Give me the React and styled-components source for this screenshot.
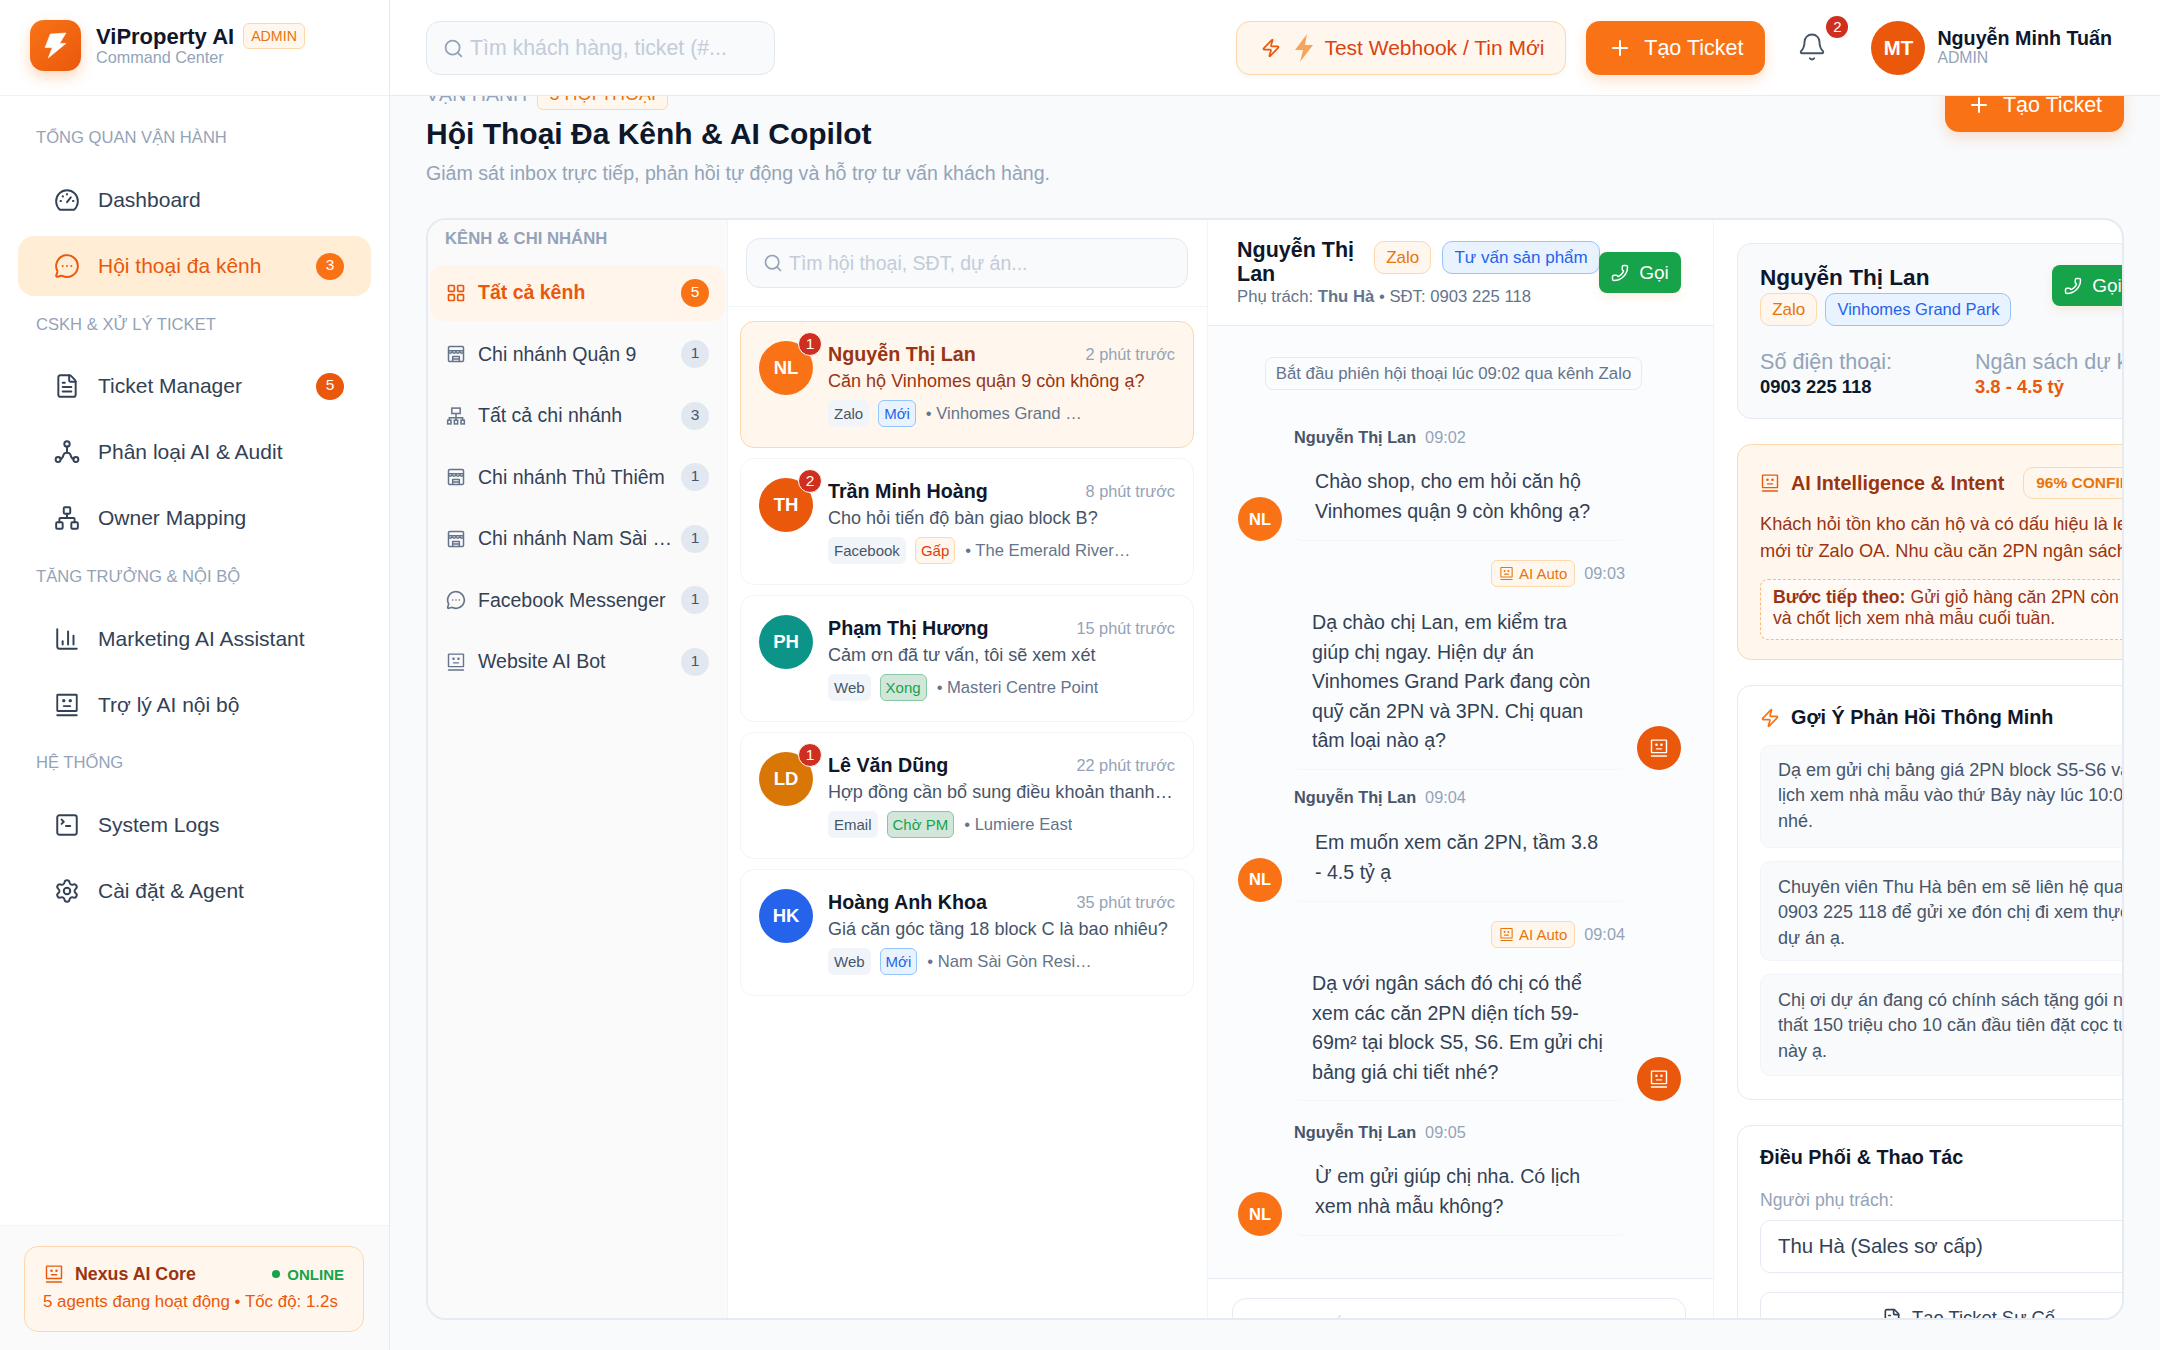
import React from 'react';
import styled, { createGlobalStyle, css } from 'styled-components';
import {
  Bell, ChartColumn, FileText, LayoutGrid, MessageCircleMore, Network, Phone, Plus, Search,
  Settings, SquareTerminal, Zap,
} from 'lucide-react';

const GlobalStyle = createGlobalStyle`
  * { box-sizing: border-box; }
  html, body { margin: 0; height: 100%; }
  body {
    font-family: "Liberation Sans", Arial, sans-serif;
    background: #f8fafc;
    color: #0f172a;
    overflow: hidden;
  }
`;

const BotIcon = ({ size = 20 }) => (
  <svg width={size} height={size} viewBox="0 0 24 24" fill="none" stroke="currentColor" strokeWidth="1.7" strokeLinecap="round">
    <rect x="3" y="2.5" width="18" height="15" rx="0.5" />
    <circle cx="9" cy="8" r="0.7" fill="currentColor" />
    <circle cx="15" cy="8" r="0.7" fill="currentColor" />
    <path d="M9 13h6M3 21.5h18" />
  </svg>
);

const GaugeIcon = ({ size = 26 }) => (
  <svg width={size} height={size} viewBox="0 0 24 24" fill="none" stroke="currentColor" strokeWidth="1.8" strokeLinecap="round" strokeLinejoin="round">
    <path d="M5.500 21C3.200 19.200 2 16 2 13 2 7.500 6.500 3 12 3s10 4.500 10 10c0 3-1.200 6.200-3.500 8z" />
    <path d="M12 14l3.500-4.500M6 13h.5M17.500 13h.5M8 8.500l.3.300M12 6.500v.5" />
  </svg>
);

const NodesIcon = ({ size = 26 }) => (
  <svg width={size} height={size} viewBox="0 0 24 24" fill="none" stroke="currentColor" strokeWidth="1.8" strokeLinecap="round">
    <circle cx="12" cy="4.500" r="2.500" />
    <circle cx="3.800" cy="19" r="2.300" />
    <circle cx="20.200" cy="19" r="2.300" />
    <path d="M12 7v5M6 18.500c1.500-.5 2.500-2.500 3-4.500 1-1.800 5-1.800 6 0 .5 2 1.500 4 3 4.500" />
  </svg>
);

const StoreIcon = ({ size = 20 }) => (
  <svg width={size} height={size} viewBox="0 0 24 24" fill="none" stroke="currentColor" strokeWidth="1.8" strokeLinejoin="round">
    <rect x="3" y="3" width="18" height="18" rx="1.500" />
    <path d="M3 8h18M3 9.500c1.500 2 3 2 4.500 0 1.500 2 3 2 4.500 0 1.500 2 3 2 4.500 0 1.500 2 3 2 4.500 0" />
    <path d="M8 21v-6h8v6M8 18h8" />
  </svg>
);

const OrgIcon = ({ size = 20 }) => (
  <svg width={size} height={size} viewBox="0 0 24 24" fill="none" stroke="currentColor" strokeWidth="1.8">
    <rect x="7" y="2.500" width="10" height="6.500" />
    <path d="M12 9v5M4 17v-3h16v3M12 14v3" />
    <rect x="2" y="17" width="4" height="4.500" />
    <rect x="10" y="17" width="4" height="4.500" />
    <rect x="18" y="17" width="4" height="4.500" />
  </svg>
);

const BoltFill = () => (
  <svg width="22" height="30" viewBox="0 0 22 30">
    <path d="M14 1 2 17h8l-3 12 13-17h-8z" fill="#f6a45e" />
  </svg>
);

const LogoBolt = () => (
  <svg width="23" height="27" viewBox="0 0 22 26">
    <path d="M6 2 21 1 15 11h6L4 25l4-10H1z" fill="#fff" stroke="#fff" strokeWidth="0.6" strokeLinejoin="round" />
  </svg>
);

const Shell = styled.div`
  display: flex;
  width: 2160px;
  height: 1350px;
  overflow: hidden;
`;

/* ---------- sidebar ---------- */

const Sidebar = styled.aside`
  width: 390px;
  flex: none;
  display: flex;
  flex-direction: column;
  background: #fff;
  border-right: 1px solid #e6eaf2;
`;

const Brand = styled.div`
  height: 96px;
  flex: none;
  display: flex;
  align-items: center;
  gap: 15px;
  padding: 0 30px 4px;
  border-bottom: 1px solid #eef1f6;
`;

const LogoMark = styled.div`
  width: 51px;
  height: 51px;
  border-radius: 14px;
  display: flex;
  align-items: center;
  justify-content: center;
  background: linear-gradient(135deg, #f97316, #ea580c);
  box-shadow: 0 6px 14px rgba(249, 115, 22, 0.28);
`;

const BrandTitleRow = styled.div`
  display: flex;
  align-items: flex-start;
  gap: 9px;
  margin-top: -4px;
`;

const BrandName = styled.div`
  font-size: 22px;
  font-weight: 700;
  line-height: 28px;
  color: #0f172a;
`;

const AdminChip = styled.span`
  font-size: 14.200px;
  line-height: 24px;
  padding: 0 7px;
  color: #e8750c;
  background: #fff7ed;
  border: 1px solid #fed7aa;
  border-radius: 6px;
  height: 26px;
`;

const BrandSub = styled.div`
  margin-top: -2px;
  font-size: 16.200px;
  line-height: 16px;
  color: #94a3b8;
`;

const Nav = styled.nav`
  flex: 1;
  padding: 12px 18px 0;
  display: flex;
  flex-direction: column;
`;

const NavLabel = styled.div`
  height: ${p => (p.$first ? '62px' : '54.400px')};
  padding: 0 0 ${p => (p.$first ? '3px' : '9px')} 18px;
  display: flex;
  align-items: center;
  font-size: 16.600px;
  color: #94a3b8;
`;

const NavItem = styled.div`
  height: 60px;
  margin-bottom: 6px;
  padding: 0 27px 0 36px;
  display: flex;
  align-items: center;
  gap: 18px;
  border-radius: 16px;
  font-size: 21px;
  color: ${p => (p.$active ? '#ea580c' : '#334155')};
  background: ${p => (p.$active ? '#ffedd5' : 'transparent')};
`;

const NavText = styled.span`
  flex: 1;
`;

const NavBadge = styled.span`
  width: 28px;
  height: 27px;
  border-radius: 50%;
  display: flex;
  align-items: center;
  justify-content: center;
  padding-bottom: 3px;
  font-size: 15.500px;
  color: #fff;
  background: ${p => p.$bg};
`;

const SideFooter = styled.div`
  height: 125px;
  flex: none;
  padding: 20px 25px 0 24px;
  background: #fafafa;
  border-top: 1px solid #f4f4f5;
`;

const CoreCard = styled.div`
  height: 86px;
  padding: 15px 19px;
  background: #fff7ed;
  border: 1px solid #fed7aa;
  border-radius: 14px;
`;

const CoreTop = styled.div`
  display: flex;
  align-items: center;
  gap: 11px;
  color: #ea580c;
  height: 24px;
`;

const CoreName = styled.b`
  flex: 1;
  font-size: 17.800px;
  color: #9a3412;
`;

const OnlineTag = styled.span`
  display: flex;
  align-items: center;
  gap: 7px;
  font-size: 15px;
  font-weight: 700;
  color: #16a34a;
  &::before {
    content: '';
    width: 8px;
    height: 8px;
    border-radius: 50%;
    background: #16a34a;
  }
`;

const CoreText = styled.div`
  font-size: 16.900px;
  line-height: 24px;
  color: #ea580c;
  margin: 4px 0 0 -1px;
  white-space: nowrap;
`;

/* ---------- top bar ---------- */

const MainCol = styled.div`
  flex: 1;
  min-width: 0;
  display: flex;
  flex-direction: column;
`;

const TopBar = styled.header`
  height: 96px;
  flex: none;
  display: flex;
  align-items: center;
  padding: 1px 36px 0;
  background: #fff;
  border-bottom: 1px solid #e6eaf2;
  position: relative;
  z-index: 2;
`;

const SearchBox = styled.div`
  display: flex;
  align-items: center;
  gap: 6px;
  width: ${p => p.$width};
  height: ${p => p.$height};
  padding: 0 16px;
  color: #94a3b8;
  background: #f8fafc;
  border: 1px solid #e2e8f0;
  border-radius: 14px;
  span {
    color: #c3ccd8;
    white-space: nowrap;
    font-size: ${p => p.$font};
  }
`;

const HeaderActions = styled.div`
  margin-left: auto;
  display: flex;
  align-items: center;
`;

const WebhookButton = styled.div`
  width: 330px;
  height: 54px;
  padding: 0 0 0 24px;
  display: flex;
  align-items: center;
  gap: 12px;
  font-size: 21px;
  color: #d9430f;
  background: #fff7ed;
  border: 1px solid #fed7aa;
  border-radius: 14px;
  box-shadow: 0 2px 4px rgba(15, 23, 42, 0.04);
  white-space: nowrap;
  & > svg:first-child { color: #ea580c; }
  & > svg:nth-child(2) { margin-right: -3px; }
`;

const PrimaryButton = styled.div`
  width: 179px;
  height: 54px;
  display: flex;
  align-items: center;
  justify-content: center;
  gap: 12px;
  font-size: 21.500px;
  color: #fff;
  background: #f97316;
  border-radius: 14px;
  box-shadow: 0 6px 14px rgba(249, 115, 22, 0.2);
  margin-left: ${p => p.$ml || '0'};
  flex: none;
`;

const BellWrap = styled.div`
  position: relative;
  width: 30px;
  height: 30px;
  margin: -3px 0 0 32px;
  color: #475569;
`;

const BellBadge = styled.span`
  position: absolute;
  top: -16px;
  left: 29px;
  width: 22px;
  height: 22px;
  border-radius: 50%;
  background: #cf2f1e;
  color: #fff;
  font-size: 15px;
  text-align: center;
  line-height: 22px;
`;

const UserAvatar = styled.div`
  width: 54px;
  height: 54px;
  margin-left: 44px;
  border-radius: 50%;
  background: #ea580c;
  color: #fff;
  font-size: 20.400px;
  font-weight: 700;
  display: flex;
  align-items: center;
  justify-content: center;
`;

const UserInfo = styled.div`
  margin: -5px 12px 0 12px;
  white-space: nowrap;
`;

const UserName = styled.div`
  font-size: 19.700px;
  font-weight: 700;
  line-height: 24px;
  color: #0f172a;
`;

const UserRole = styled.div`
  font-size: 15.800px;
  line-height: 16px;
  color: #94a3b8;
`;

/* ---------- page ---------- */

const PageScroll = styled.main`
  flex: 1;
  min-height: 0;
  overflow: hidden;
`;

const Page = styled.div`
  margin-top: -18px;
  padding: 0 36px;
`;

const PageHead = styled.div`
  display: flex;
  justify-content: space-between;
  align-items: flex-start;
`;

const Eyebrow = styled.div`
  display: flex;
  align-items: center;
  gap: 10px;
  height: 32px;
  font-size: 19.600px;
  color: #94a3b8;
`;

const EyebrowChip = styled.span`
  width: 131px;
  height: 32px;
  display: flex;
  align-items: center;
  justify-content: center;
  font-size: 18px;
  color: #e8750c;
  background: #fff7ed;
  border: 1px solid #fed7aa;
  border-radius: 6px;
`;

const PageTitle = styled.h1`
  margin: 6px 0 0;
  font-size: 30px;
  line-height: 36px;
  font-weight: 700;
  color: #0f172a;
`;

const PageSub = styled.p`
  margin: 9px 0 0;
  font-size: 19.600px;
  line-height: 24px;
  color: #94a3b8;
`;

const Workspace = styled.section`
  margin-top: 33px;
  height: 1102px;
  display: grid;
  grid-template-columns: 299px 481px 506px 1fr;
  background: #fff;
  border: 2px solid #e6eaf2;
  border-radius: 20px;
  overflow: hidden;
`;

/* ---------- channels ---------- */

const ChannelCol = styled.div`
  background: #fbfafa;
  padding: 0 2px;
`;

const ChannelHead = styled.div`
  height: 45px;
  padding: 0 0 8px 15px;
  display: flex;
  align-items: center;
  font-size: 16.700px;
  font-weight: 700;
  color: #94a3b8;
`;

const ChannelRow = styled.div`
  height: 55.500px;
  margin-bottom: 6px;
  padding: 0 16px 0 16px;
  display: flex;
  align-items: center;
  gap: 12px;
  border-radius: 14px;
  font-size: 19.500px;
  color: ${p => (p.$active ? '#ea580c' : '#334155')};
  font-weight: ${p => (p.$active ? 700 : 400)};
  background: ${p => (p.$active ? '#fff5eb' : 'transparent')};
  & > svg { flex: none; color: ${p => (p.$active ? '#ea580c' : '#64748b')}; }
`;

const ChannelName = styled.span`
  flex: 1;
  min-width: 0;
  overflow: hidden;
  white-space: nowrap;
  text-overflow: ellipsis;
`;

const CountBadge = styled.span`
  width: 28px;
  height: 28px;
  flex: none;
  margin-left: -5px;
  border-radius: 50%;
  display: flex;
  align-items: center;
  justify-content: center;
  padding-bottom: 2px;
  font-size: 15.500px;
  font-weight: 400;
  color: ${p => (p.$active ? '#fff' : '#475569')};
  background: ${p => (p.$active ? '#f97316' : '#e2e8f0')};
`;

/* ---------- conversation list ---------- */

const ListCol = styled.div`
  border-left: 1px solid #f1f5f9;
  border-right: 1px solid #f1f5f9;
`;

const ListSearch = styled.div`
  height: 87px;
  padding: 18px 18px 0;
  border-bottom: 1px solid #f1f5f9;
`;

const ConvList = styled.div`
  padding: 14px 13px 14px 12px;
  display: flex;
  flex-direction: column;
  gap: 10px;
`;

const ConvCard = styled.div`
  height: 127px;
  padding: 19px 18px 0;
  display: flex;
  gap: 15px;
  border-radius: 14px;
  background: ${p => (p.$active ? '#fff7ed' : '#fff')};
  border: 1.500px solid ${p => (p.$active ? '#fed7aa' : '#f1f5f9')};
`;

const Avatar = styled.div`
  position: relative;
  width: ${p => p.$size}px;
  height: ${p => p.$size}px;
  flex: none;
  border-radius: 50%;
  background: ${p => p.$bg};
  color: #fff;
  font-size: ${p => (p.$size > 50 ? '18.500px' : '16.500px')};
  font-weight: 700;
  display: flex;
  align-items: center;
  justify-content: center;
`;

const UnreadDot = styled.span`
  position: absolute;
  top: -9px;
  right: -9px;
  width: 24px;
  height: 24px;
  border-radius: 50%;
  border: 1.500px solid #fff;
  background: #cf2f1e;
  color: #fff;
  font-size: 15.500px;
  font-weight: 400;
  line-height: 21px;
  text-align: center;
`;

const ConvBody = styled.div`
  flex: 1;
  min-width: 0;
  margin-top: -1px;
`;

const ConvTop = styled.div`
  display: flex;
  justify-content: space-between;
  align-items: center;
  height: 28px;
`;

const ConvName = styled.b`
  font-size: 19.700px;
  color: ${p => (p.$active ? '#9a3412' : '#0f172a')};
`;

const ConvTime = styled.span`
  font-size: 16.300px;
  color: #94a3b8;
`;

const ConvPreview = styled.div`
  height: 27px;
  line-height: 27px;
  font-size: 18.050px;
  white-space: nowrap;
  overflow: hidden;
  text-overflow: ellipsis;
  color: ${p => (p.$active ? '#9a3412' : '#475569')};
`;

const ConvMeta = styled.div`
  margin-top: 5px;
  display: flex;
  align-items: center;
  gap: 9px;
  height: 27px;
`;

const tagTones = {
  gray: css`
    color: #475569;
    background: #f1f5f9;
    border-color: #f1f5f9;
  `,
  blue: css`
    color: #2563eb;
    background: #e8f3ff;
    border-color: #93c5fd;
  `,
  orange: css`
    color: #dc3d12;
    background: #fff7ed;
    border-color: #fed7aa;
  `,
  green: css`
    color: #16a34a;
    background: #d3e6dc;
    border-color: #86c9a0;
  `,
  amber: css`
    color: #e8750c;
    background: #fff7ed;
    border-color: #fed7aa;
  `,
};

const Tag = styled.span`
  height: 27px;
  padding: 0 ${p => p.$pad || '5px'};
  display: inline-flex;
  align-items: center;
  gap: 5px;
  flex: none;
  font-size: 15px;
  white-space: nowrap;
  border: 1px solid;
  border-radius: 6px;
  ${p => tagTones[p.$tone]}
`;

const ConvProject = styled.span`
  max-width: 165.500px;
  margin-left: 1px;
  overflow: hidden;
  white-space: nowrap;
  text-overflow: ellipsis;
  font-size: 16.600px;
  color: #64748b;
`;

/* ---------- chat ---------- */

const ChatCol = styled.div`
  min-width: 0;
  display: flex;
  flex-direction: column;
  border-right: 1px solid #f1f5f9;
`;

const ChatHead = styled.div`
  height: 106px;
  flex: none;
  padding: 0 32px 0 29px;
  display: flex;
  align-items: center;
  border-bottom: 1px solid #e6eaf2;
`;

const ChatHeadInfo = styled.div`
  flex: 1;
  min-width: 0;
  padding-top: 2px;
`;

const ChatHeadTop = styled.div`
  display: flex;
  align-items: flex-start;
  gap: 11px;
`;

const ChatName = styled.div`
  width: 126px;
  flex: none;
  font-size: 21.500px;
  font-weight: 700;
  line-height: 23.500px;
  color: #0f172a;
`;

const HeadTag = styled(Tag)`
  height: 33px;
  padding: 0 ${p => p.$pad || '11.200px'};
  font-size: ${p => p.$font || '17px'};
  border-radius: 10px;
  margin-top: 2px;
`;

const ChatMeta = styled.div`
  font-size: 16.700px;
  line-height: 22px;
  color: #64748b;
  white-space: nowrap;
`;

const CallButton = styled.div`
  width: 82px;
  height: 41px;
  flex: none;
  display: flex;
  align-items: center;
  justify-content: center;
  gap: 10px;
  font-size: 19px;
  color: #fff;
  background: #16a34a;
  border-radius: 8px;
  box-shadow: 0 4px 10px rgba(249, 115, 22, 0.12);
  position: relative;
`;

const PhoneIcon = styled(Phone)`
  transform: scaleX(-1);
`;

const ChatBody = styled.div`
  flex: 1;
  min-height: 0;
  overflow: hidden;
  padding: 31px 32px 0 30px;
  background: #fbfcfe;
`;

const SystemPill = styled.div`
  width: 377px;
  height: 33px;
  margin: 0 auto 36px 27px;
  display: flex;
  align-items: center;
  justify-content: center;
  font-size: 16.800px;
  color: #64748b;
  background: #fbfcfe;
  border: 1px solid #e6eaf2;
  border-radius: 8px;
  white-space: nowrap;
`;

const MsgRow = styled.div`
  display: flex;
  align-items: flex-end;
  gap: 12px;
  margin-top: ${p => p.$mt}px;
  justify-content: ${p => (p.$bot ? 'flex-end' : 'flex-start')};
`;

const MsgMain = styled.div`
  width: 333px;
  margin-right: ${p => (p.$bot ? '0' : 'auto')};
`;

const MsgHead = styled.div`
  display: flex;
  align-items: center;
  gap: 9px;
  height: ${p => (p.$bot ? '27px' : '22px')};
  margin-bottom: ${p => (p.$bot ? '4px' : '2px')};
  justify-content: ${p => (p.$bot ? 'flex-end' : 'flex-start')};
`;

const MsgSender = styled.b`
  font-size: 16.300px;
  color: #475569;
`;

const MsgTime = styled.span`
  font-size: 16.300px;
  color: #94a3b8;
`;

const Bubble = styled.div`
  padding: ${p => (p.$bot ? '17px 20px 13px 20px' : '16px 20px 14px 21px')};
  font-size: 19.600px;
  line-height: ${p => (p.$bot ? '29.600px' : '30px')};
  color: #334155;
  border-bottom: 1px solid #f3f5f9;
  border-radius: 8px;
  white-space: nowrap;
`;

const Composer = styled.div`
  height: 40px;
  flex: none;
  padding: 19px 27px 0 24px;
  background: #fff;
  border-top: 1px solid #e6eaf2;
  overflow: hidden;
`;

const ComposerBox = styled.div`
  height: 60px;
  border: 1.500px solid #e6eaf2;
  border-radius: 14px;
  padding: 16px 18px;
  font-size: 16.300px;
  color: #cbd5e1;
`;

/* ---------- right panel ---------- */

const InsightCol = styled.div`
  min-width: 0;
  overflow: hidden;
  padding: 23px 0 0 23px;
`;

const Panel = styled.div`
  width: 419px;
  margin-bottom: 25px;
  padding: ${p => p.$pad || '0 22px'};
  height: ${p => p.$height}px;
  border-radius: 14px 0 0 14px;
  border: 1.500px solid ${p => p.$border || '#e6eaf2'};
  background: ${p => p.$bg || '#fff'};
`;

const ContactTop = styled.div`
  display: flex;
  justify-content: space-between;
`;

const ContactName = styled.div`
  font-size: 22.600px;
  font-weight: 700;
  line-height: 28px;
  color: #0f172a;
`;

const ContactTags = styled.div`
  display: flex;
  gap: 8px;
  margin-top: 1px;
  ${HeadTag} { margin-top: 0; }
`;

const ContactButton = styled(CallButton)`
  margin: 1px -1px 0 0;
`;

const ContactGrid = styled.div`
  display: grid;
  grid-template-columns: 215px 1fr;
  margin-top: 23px;
  white-space: nowrap;
`;

const ContactLabel = styled.div`
  font-size: 21.600px;
  line-height: 26px;
  color: #94a3b8;
`;

const ContactValue = styled.div`
  font-size: 18.400px;
  line-height: 24px;
  font-weight: 700;
  color: ${p => p.$color};
`;

const PanelTitleRow = styled.div`
  display: flex;
  align-items: center;
  gap: 11px;
  font-size: ${p => p.$font || '19.800px'};
  font-weight: 700;
  color: ${p => p.$color};
  white-space: nowrap;
  & > svg { flex: none; color: ${p => p.$icon}; }
`;

const ConfidenceChip = styled.span`
  margin-left: 8px;
  height: 32px;
  padding: 0 12px;
  display: flex;
  align-items: center;
  font-size: 15.500px;
  color: #e8750c;
  background: #fff7ed;
  border: 1px solid #fed7aa;
  border-radius: 10px;
`;

const IntentText = styled.div`
  margin-top: 12px;
  font-size: 18.200px;
  line-height: 27px;
  color: #9a3412;
  white-space: nowrap;
`;

const NextStep = styled.div`
  margin-top: 14px;
  height: 61px;
  padding: 7px 12px;
  font-size: 17.700px;
  line-height: 21px;
  color: #9a3412;
  white-space: nowrap;
  background: #fffaf5;
  border: 1.500px dashed #fdba74;
  border-radius: 8px;
`;

const SuggestBox = styled.div`
  margin-top: ${p => p.$mt}px;
  height: ${p => p.$height}px;
  padding: ${p => p.$padTop}px 17px 0;
  font-size: 18px;
  line-height: 25.300px;
  color: #475569;
  white-space: nowrap;
  background: #f8fafc;
  border: 1px solid #f1f5f9;
  border-radius: 10px;
`;

const FieldLabel = styled.div`
  margin-top: 19px;
  font-size: 17.700px;
  line-height: 24px;
  color: #94a3b8;
`;

const SelectBox = styled.div`
  margin-top: 8px;
  height: 53px;
  padding: 0 17px;
  display: flex;
  align-items: center;
  font-size: 20.400px;
  color: #334155;
  background: #fff;
  border: 1.500px solid #e6eaf2;
  border-radius: 10px;
`;

const OutlineButton = styled.div`
  margin: 19px -44px 0 0;
  height: 52px;
  display: flex;
  align-items: center;
  justify-content: center;
  gap: 10px;
  font-size: 18.400px;
  color: #334155;
  border: 1.500px solid #e6eaf2;
  border-radius: 10px;
`;

const navGroups = [
  { label: 'TỔNG QUAN VẬN HÀNH', items: [
    { text: 'Dashboard', icon: <GaugeIcon /> },
    { text: 'Hội thoại đa kênh', icon: <MessageCircleMore size={26} strokeWidth={1.8} />, active: true, badge: '3', badgeBg: '#f97316' },
  ] },
  { label: 'CSKH & XỬ LÝ TICKET', items: [
    { text: 'Ticket Manager', icon: <FileText size={26} strokeWidth={1.8} />, badge: '5', badgeBg: '#ea580c' },
    { text: 'Phân loại AI & Audit', icon: <NodesIcon /> },
    { text: 'Owner Mapping', icon: <Network size={26} strokeWidth={1.8} /> },
  ] },
  { label: 'TĂNG TRƯỞNG & NỘI BỘ', items: [
    { text: 'Marketing AI Assistant', icon: <ChartColumn size={26} strokeWidth={1.8} /> },
    { text: 'Trợ lý AI nội bộ', icon: <BotIcon size={26} /> },
  ] },
  { label: 'HỆ THỐNG', items: [
    { text: 'System Logs', icon: <SquareTerminal size={26} strokeWidth={1.8} /> },
    { text: 'Cài đặt & Agent', icon: <Settings size={26} strokeWidth={1.8} /> },
  ] },
];

const channels = [
  { name: 'Tất cả kênh', count: 5, icon: <LayoutGrid size={20} />, active: true },
  { name: 'Chi nhánh Quận 9', count: 1, icon: <StoreIcon /> },
  { name: 'Tất cả chi nhánh', count: 3, icon: <OrgIcon /> },
  { name: 'Chi nhánh Thủ Thiêm', count: 1, icon: <StoreIcon /> },
  { name: 'Chi nhánh Nam Sài Gòn', count: 1, icon: <StoreIcon /> },
  { name: 'Facebook Messenger', count: 1, icon: <MessageCircleMore size={20} /> },
  { name: 'Website AI Bot', count: 1, icon: <BotIcon size={20} /> },
];

const conversations = [
  { initials: 'NL', bg: '#f97316', unread: 1, name: 'Nguyễn Thị Lan', time: '2 phút trước', text: 'Căn hộ Vinhomes quận 9 còn không ạ?', source: 'Zalo', status: 'Mới', tone: 'blue', project: 'Vinhomes Grand Park', active: true },
  { initials: 'TH', bg: '#ea580c', unread: 2, name: 'Trần Minh Hoàng', time: '8 phút trước', text: 'Cho hỏi tiến độ bàn giao block B?', source: 'Facebook', status: 'Gấp', tone: 'orange', project: 'The Emerald River Park' },
  { initials: 'PH', bg: '#0d9488', name: 'Phạm Thị Hương', time: '15 phút trước', text: 'Cảm ơn đã tư vấn, tôi sẽ xem xét', source: 'Web', status: 'Xong', tone: 'green', project: 'Masteri Centre Point' },
  { initials: 'LD', bg: '#d97706', unread: 1, name: 'Lê Văn Dũng', time: '22 phút trước', text: 'Hợp đồng cần bổ sung điều khoản thanh toán', source: 'Email', status: 'Chờ PM', tone: 'green', project: 'Lumiere East' },
  { initials: 'HK', bg: '#2563eb', name: 'Hoàng Anh Khoa', time: '35 phút trước', text: 'Giá căn góc tầng 18 block C là bao nhiêu?', source: 'Web', status: 'Mới', tone: 'blue', project: 'Nam Sài Gòn Residence' },
];

const messages = [
  { time: '09:02', mt: 0, lines: ['Chào shop, cho em hỏi căn hộ', 'Vinhomes quận 9 còn không ạ?'] },
  { time: '09:03', mt: 19, bot: true, lines: ['Dạ chào chị Lan, em kiểm tra', 'giúp chị ngay. Hiện dự án', 'Vinhomes Grand Park đang còn', 'quỹ căn 2PN và 3PN. Chị quan', 'tâm loại nào ạ?'] },
  { time: '09:04', mt: 17, lines: ['Em muốn xem căn 2PN, tầm 3.8', '- 4.5 tỷ ạ'] },
  { time: '09:04', mt: 19, bot: true, lines: ['Dạ với ngân sách đó chị có thể', 'xem các căn 2PN diện tích 59-', '69m² tại block S5, S6. Em gửi chị', 'bảng giá chi tiết nhé?'] },
  { time: '09:05', mt: 20, lines: ['Ừ em gửi giúp chị nha. Có lịch', 'xem nhà mẫu không?'] },
];

const suggestions = [
  { mt: 16, height: 103, padTop: 12, lines: ['Dạ em gửi chị bảng giá 2PN block S5-S6 và đặt', 'lịch xem nhà mẫu vào thứ Bảy này lúc 10:00 sáng', 'nhé.'] },
  { mt: 13, height: 100, padTop: 13, lines: ['Chuyên viên Thu Hà bên em sẽ liên hệ qua số', '0903 225 118 để gửi xe đón chị đi xem thực tế', 'dự án ạ.'] },
  { mt: 13, height: 102, padTop: 13, lines: ['Chị ơi dự án đang có chính sách tặng gói nội', 'thất 150 triệu cho 10 căn đầu tiên đặt cọc tuần', 'này ạ.'] },
];

const withBreaks = lines => lines.map((line, i) => (
  <React.Fragment key={i}>{i > 0 && <br />}{line}</React.Fragment>
));

const App = () => (
  <>
    <GlobalStyle />
    <Shell>
      <Sidebar>
        <Brand>
          <LogoMark>
            <LogoBolt />
          </LogoMark>
          <div>
            <BrandTitleRow>
              <BrandName>ViProperty AI</BrandName>
              <AdminChip>ADMIN</AdminChip>
            </BrandTitleRow>
            <BrandSub>Command Center</BrandSub>
          </div>
        </Brand>
        <Nav>
          {navGroups.map((group, g) => (
            <React.Fragment key={group.label}>
              <NavLabel $first={g === 0}>{group.label}</NavLabel>
              {group.items.map(item => (
                <NavItem key={item.text} $active={item.active}>
                  {item.icon}
                  <NavText>{item.text}</NavText>
                  {item.badge && <NavBadge $bg={item.badgeBg}>{item.badge}</NavBadge>}
                </NavItem>
              ))}
            </React.Fragment>
          ))}
        </Nav>
        <SideFooter>
          <CoreCard>
            <CoreTop>
              <BotIcon size={20} />
              <CoreName>Nexus AI Core</CoreName>
              <OnlineTag>ONLINE</OnlineTag>
            </CoreTop>
            <CoreText>5 agents đang hoạt động • Tốc độ: 1.2s</CoreText>
          </CoreCard>
        </SideFooter>
      </Sidebar>

      <MainCol>
        <TopBar>
          <SearchBox $width="349px" $height="54px" $font="21.300px">
            <Search size={21} />
            <span>Tìm khách hàng, ticket (#...</span>
          </SearchBox>
          <HeaderActions>
            <WebhookButton>
              <Zap size={20} />
              <BoltFill />
              Test Webhook / Tin Mới
            </WebhookButton>
            <PrimaryButton $ml="20px">
              <Plus size={24} />
              Tạo Ticket
            </PrimaryButton>
            <BellWrap>
              <Bell size={30} strokeWidth={1.5} />
              <BellBadge>2</BellBadge>
            </BellWrap>
            <UserAvatar>MT</UserAvatar>
            <UserInfo>
              <UserName>Nguyễn Minh Tuấn</UserName>
              <UserRole>ADMIN</UserRole>
            </UserInfo>
          </HeaderActions>
        </TopBar>

        <PageScroll>
          <Page>
            <PageHead>
              <div>
                <Eyebrow>
                  VẬN HÀNH
                  <EyebrowChip>5 HỘI THOẠI</EyebrowChip>
                </Eyebrow>
                <PageTitle>Hội Thoại Đa Kênh &amp; AI Copilot</PageTitle>
                <PageSub>Giám sát inbox trực tiếp, phản hồi tự động và hỗ trợ tư vấn khách hàng.</PageSub>
              </div>
              <PrimaryButton>
                <Plus size={24} />
                Tạo Ticket
              </PrimaryButton>
            </PageHead>

            <Workspace>
              <ChannelCol>
                <ChannelHead>KÊNH &amp; CHI NHÁNH</ChannelHead>
                {channels.map(c => (
                  <ChannelRow key={c.name} $active={c.active}>
                    {c.icon}
                    <ChannelName>{c.name}</ChannelName>
                    <CountBadge $active={c.active}>{c.count}</CountBadge>
                  </ChannelRow>
                ))}
              </ChannelCol>

              <ListCol>
                <ListSearch>
                  <SearchBox $width="442px" $height="50px" $font="19.500px">
                    <Search size={20} />
                    <span>Tìm hội thoại, SĐT, dự án...</span>
                  </SearchBox>
                </ListSearch>
                <ConvList>
                  {conversations.map(c => (
                    <ConvCard key={c.initials} $active={c.active}>
                      <Avatar $size={54} $bg={c.bg}>
                        {c.initials}
                        {c.unread && <UnreadDot>{c.unread}</UnreadDot>}
                      </Avatar>
                      <ConvBody>
                        <ConvTop>
                          <ConvName $active={c.active}>{c.name}</ConvName>
                          <ConvTime>{c.time}</ConvTime>
                        </ConvTop>
                        <ConvPreview $active={c.active}>{c.text}</ConvPreview>
                        <ConvMeta>
                          <Tag $tone="gray">{c.source}</Tag>
                          <Tag $tone={c.tone}>{c.status}</Tag>
                          <ConvProject>• {c.project}</ConvProject>
                        </ConvMeta>
                      </ConvBody>
                    </ConvCard>
                  ))}
                </ConvList>
              </ListCol>

              <ChatCol>
                <ChatHead>
                  <ChatHeadInfo>
                    <ChatHeadTop>
                      <ChatName>Nguyễn Thị Lan</ChatName>
                      <HeadTag $tone="amber">Zalo</HeadTag>
                      <HeadTag $tone="blue" $pad="11px">Tư vấn sản phẩm</HeadTag>
                    </ChatHeadTop>
                    <ChatMeta>Phụ trách: <b>Thu Hà</b> • SĐT: 0903 225 118</ChatMeta>
                  </ChatHeadInfo>
                  <CallButton>
                    <PhoneIcon size={18} />
                    Gọi
                  </CallButton>
                </ChatHead>
                <ChatBody>
                  <SystemPill>Bắt đầu phiên hội thoại lúc 09:02 qua kênh Zalo</SystemPill>
                  {messages.map((m, i) => (
                    <MsgRow key={i} $bot={m.bot} $mt={m.mt}>
                      {!m.bot && <Avatar $size={44} $bg="#f97316">NL</Avatar>}
                      <MsgMain $bot={m.bot}>
                        <MsgHead $bot={m.bot}>
                          {m.bot ? (
                            <Tag $tone="amber" $pad="7px"><BotIcon size={15} />AI Auto</Tag>
                          ) : (
                            <MsgSender>Nguyễn Thị Lan</MsgSender>
                          )}
                          <MsgTime>{m.time}</MsgTime>
                        </MsgHead>
                        <Bubble $bot={m.bot}>{withBreaks(m.lines)}</Bubble>
                      </MsgMain>
                      {m.bot && <Avatar $size={44} $bg="#ea580c"><BotIcon size={20} /></Avatar>}
                    </MsgRow>
                  ))}
                </ChatBody>
                <Composer>
                  <ComposerBox>Nhập tin nhắn trả lời khách hàng tại đây...</ComposerBox>
                </Composer>
              </ChatCol>

              <InsightCol>
                <Panel $height={176} $bg="#f8fafc" $pad="20px 22px 0">
                  <ContactTop>
                    <div>
                      <ContactName>Nguyễn Thị Lan</ContactName>
                      <ContactTags>
                        <HeadTag $tone="amber">Zalo</HeadTag>
                        <HeadTag $tone="blue" $font="16.500px" $pad="11px">Vinhomes Grand Park</HeadTag>
                      </ContactTags>
                    </div>
                    <ContactButton>
                      <PhoneIcon size={18} />
                      Gọi
                    </ContactButton>
                  </ContactTop>
                  <ContactGrid>
                    <div>
                      <ContactLabel>Số điện thoại:</ContactLabel>
                      <ContactValue $color="#0f172a">0903 225 118</ContactValue>
                    </div>
                    <div>
                      <ContactLabel>Ngân sách dự kiến:</ContactLabel>
                      <ContactValue $color="#ea580c">3.8 - 4.5 tỷ</ContactValue>
                    </div>
                  </ContactGrid>
                </Panel>

                <Panel $height={216} $bg="#fff7ed" $border="#fed7aa" $pad="22px 22px 0">
                  <PanelTitleRow $color="#9a3412" $icon="#ea580c">
                    <BotIcon size={20} />
                    AI Intelligence &amp; Intent
                    <ConfidenceChip>96% CONFIDENCE</ConfidenceChip>
                  </PanelTitleRow>
                  <IntentText>
                    Khách hỏi tồn kho căn hộ và có dấu hiệu là lead<br />
                    mới từ Zalo OA. Nhu cầu căn 2PN ngân sách 4 tỷ.
                  </IntentText>
                  <NextStep>
                    <b>Bước tiếp theo:</b> Gửi giỏ hàng căn 2PN còn trống<br />
                    và chốt lịch xem nhà mẫu cuối tuần.
                  </NextStep>
                </Panel>

                <Panel $height={415} $pad="20px 22px 0">
                  <PanelTitleRow $color="#0f172a" $icon="#f97316">
                    <Zap size={20} />
                    Gợi Ý Phản Hồi Thông Minh
                  </PanelTitleRow>
                  {suggestions.map((s, i) => (
                    <SuggestBox key={i} $mt={s.mt} $height={s.height} $padTop={s.padTop}>{withBreaks(s.lines)}</SuggestBox>
                  ))}
                </Panel>

                <Panel $height={260} $pad="20px 22px 0">
                  <PanelTitleRow $color="#0f172a">Điều Phối &amp; Thao Tác</PanelTitleRow>
                  <FieldLabel>Người phụ trách:</FieldLabel>
                  <SelectBox>Thu Hà (Sales sơ cấp)</SelectBox>
                  <OutlineButton>
                    <FileText size={20} />
                    Tạo Ticket Sự Cố
                  </OutlineButton>
                </Panel>
              </InsightCol>
            </Workspace>
          </Page>
        </PageScroll>
      </MainCol>
    </Shell>
  </>
);

export default App;
